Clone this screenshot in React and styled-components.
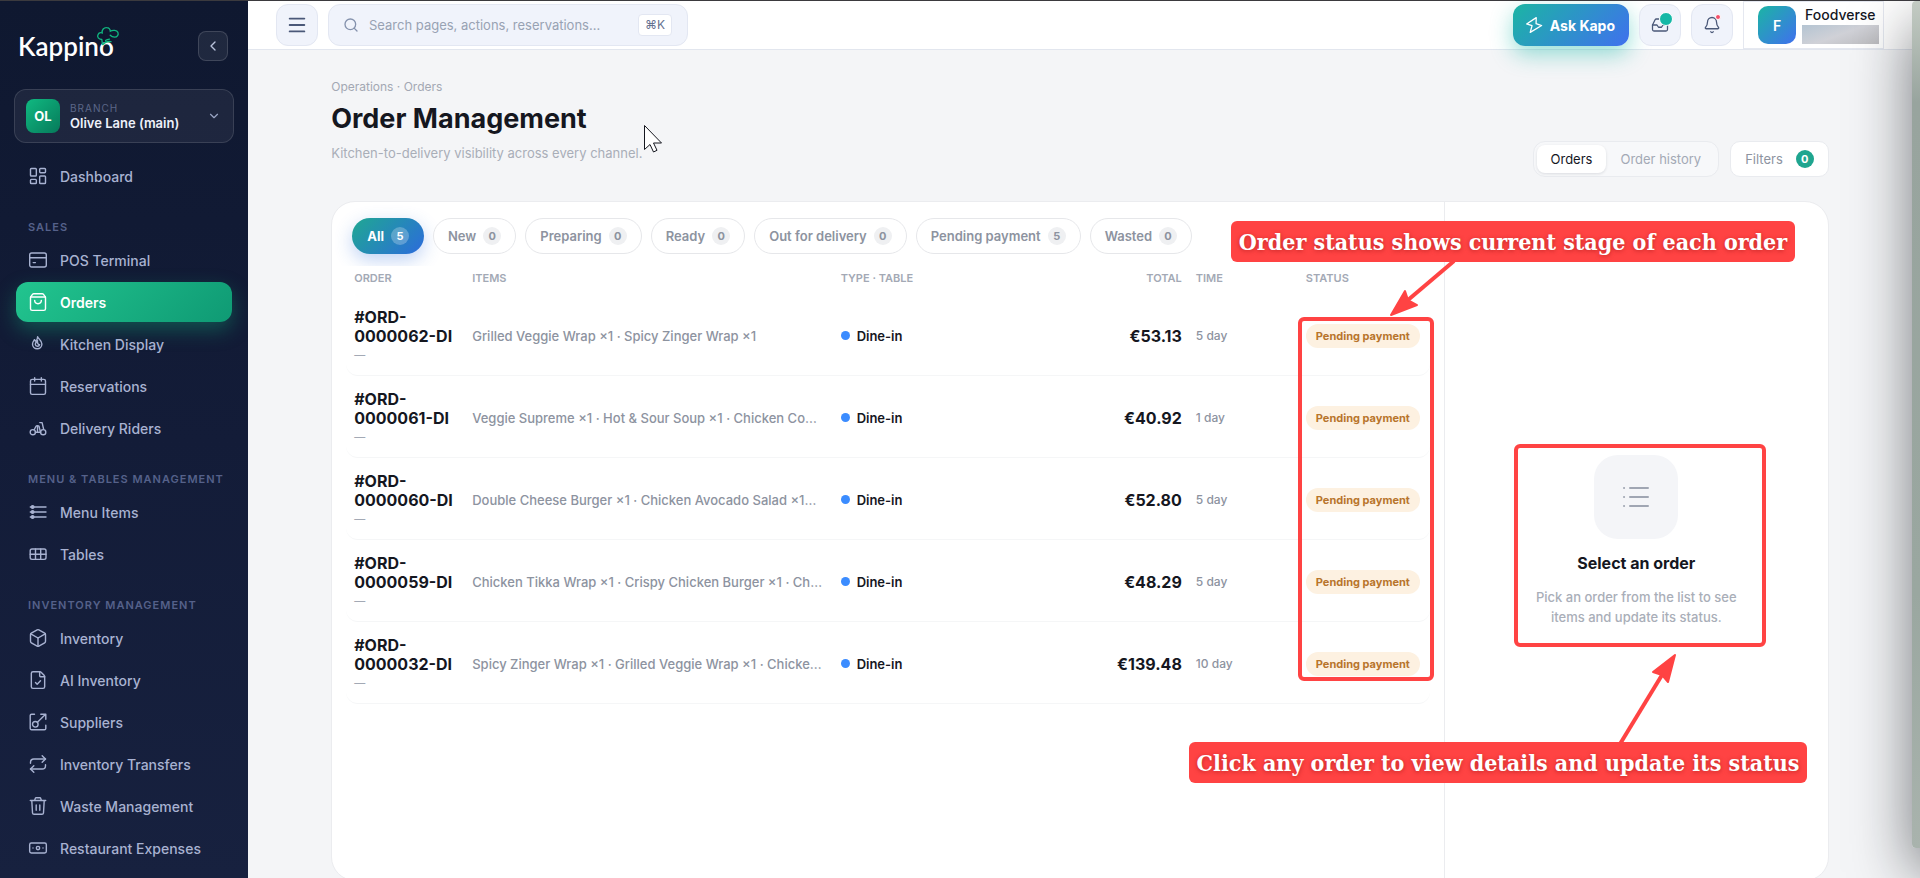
import React from 'react';
import styled, { createGlobalStyle } from 'styled-components';
import {
  Banknote,
  Bell,
  Box,
  Calendar,
  ChevronDown,
  ChevronLeft,
  FileCheck,
  Inbox,
  LayoutDashboard,
  Menu,
  Repeat,
  Search,
  ShoppingBag,
} from 'lucide-react';

const GlobalStyle = createGlobalStyle`
  *, *::before, *::after { box-sizing: border-box; }

  body {
    margin: 0;
    font-family: Inter, 'Open Sans', sans-serif;
    font-size: 14px;
    color: #15171f;
    background: #f4f5f7;
  }

  button, input { font-family: inherit; }
  h1, h2, p { margin: 0; }
`;

const Page = styled.div`
  position: relative;
  display: flex;
  height: 100vh;
  overflow: hidden;
  border-top: 1px solid #3b3a3e;
`;

/* Sidebar */

const Sidebar = styled.aside`
  flex: 0 0 248px;
  padding: 30px 14px 0;
  overflow: hidden;
  background: linear-gradient(180deg, #0f1830 0%, #131c38 50%, #17213f 100%);
`;

const Brand = styled.div`
  display: flex;
  align-items: center;
  justify-content: space-between;
  height: 30px;
  padding: 0 6px 0 4px;
`;

const Logo = styled.a`
  position: relative;
  font-family: Lato, sans-serif;
  font-size: 26px;
  font-weight: 600;
  line-height: 30px;
  color: #fff;
  text-decoration: none;
`;

const Hat = styled.svg`
  position: absolute;
  top: -5px;
  right: -6px;
`;

const CollapseButton = styled.button`
  display: grid;
  place-items: center;
  width: 30px;
  height: 30px;
  padding: 0;
  border: 1px solid rgba(255, 255, 255, .14);
  border-radius: 8px;
  background: rgba(255, 255, 255, .07);
  color: #b9c3dc;
`;

const Branch = styled.button`
  display: flex;
  align-items: center;
  gap: 10px;
  width: 100%;
  height: 54px;
  margin: 28px 0 13px;
  padding: 0 12px 0 11px;
  border: 1px solid rgba(255, 255, 255, .12);
  border-radius: 12px;
  background: rgba(255, 255, 255, .06);
  color: #9aa5c4;
  text-align: left;
`;

const BranchAvatar = styled.span`
  display: grid;
  place-items: center;
  width: 34px;
  height: 34px;
  border-radius: 8px;
  background: linear-gradient(135deg, #10b981, #067a5a);
  font-size: 13px;
  font-weight: 700;
  color: #fff;
`;

const BranchText = styled.span`
  flex: 1;
  font-size: 13px;
  font-weight: 600;
  line-height: 16px;
  color: #eef1fa;
`;

const BranchLabel = styled.span`
  display: block;
  font-size: 10px;
  font-weight: 400;
  line-height: 13px;
  letter-spacing: 1px;
  color: #5c6788;
`;

const Nav = styled.nav`
  display: flex;
  flex-direction: column;
  gap: 2px;
  padding: 0 2px;
`;

const NavLabel = styled.div`
  padding: 21px 12px 3px;
  font-size: 11px;
  font-weight: 600;
  line-height: 16px;
  letter-spacing: 1px;
  color: #55618a;
  white-space: nowrap;
`;

const NavLink = styled.a`
  display: flex;
  flex: 0 0 40px;
  align-items: center;
  gap: 12px;
  padding: 0 12px;
  border-radius: 12px;
  font-size: 14px;
  font-weight: ${p => (p.$active ? 600 : 500)};
  color: ${p => (p.$active ? '#fff' : '#a8b2d1')};
  text-decoration: none;
  background: ${p => (p.$active ? 'linear-gradient(135deg, #22c58f, #0f9a74)' : 'none')};
  box-shadow: ${p => (p.$active ? '0 8px 20px rgba(16, 185, 129, .35)' : 'none')};
`;

/* Top bar */

const Content = styled.div`
  flex: 1;
  min-width: 0;
  display: flex;
  flex-direction: column;
`;

const TopBar = styled.header`
  display: flex;
  flex: 0 0 49px;
  align-items: center;
  gap: 10px;
  padding: 0 36px 0 28px;
  border-bottom: 1px solid #e2e6ee;
  background: #fff;
`;

const SquareButton = styled.button`
  position: relative;
  display: grid;
  place-items: center;
  width: 42px;
  height: 42px;
  padding: 0;
  border: 1px solid #e3e7f2;
  border-radius: 12px;
  background: #f0f3fb;
  color: #4a5878;
`;

const Dot = styled.span`
  position: absolute;
  top: ${p => p.$top}px;
  right: ${p => p.$right}px;
  width: ${p => p.$size}px;
  height: ${p => p.$size}px;
  border: 1px solid #fff;
  border-radius: 50%;
  background: ${p => p.$color};
`;

const SearchBox = styled.label`
  display: flex;
  align-items: center;
  gap: 10px;
  width: 360px;
  height: 42px;
  padding: 0 15px 0 14px;
  border: 1px solid #e3e7f2;
  border-radius: 12px;
  background: #f0f3fb;
  color: #8592ad;

  input {
    flex: 1;
    min-width: 0;
    padding: 0;
    border: 0;
    outline: 0;
    background: none;
    font-size: 13px;
  }

  input::placeholder { color: #98a2b3; }
`;

const Kbd = styled.kbd`
  padding: 0 6px;
  border: 1px solid #e3e7f2;
  border-radius: 4px;
  background: #fff;
  font-family: Inter, 'DejaVu Sans', sans-serif;
  font-size: 12px;
  line-height: 20px;
  color: #64718f;
`;

const Spacer = styled.div`
  flex: 1;
`;

const AskButton = styled.button`
  display: flex;
  align-items: center;
  gap: 7px;
  height: 42px;
  padding: 0 14px 0 12px;
  border: 0;
  border-radius: 12px;
  background: linear-gradient(135deg, #1bb5a4, #4070ee);
  box-shadow: 0 8px 22px rgba(20, 184, 166, .45);
  font-size: 14px;
  font-weight: 700;
  color: #fff;
`;

const Profile = styled.div`
  display: flex;
  align-items: center;
  gap: 6px;
  align-self: stretch;
  padding: 0 4px 0 14px;
  border: 1px solid #e5e8f0;
`;

const ProfileAvatar = styled.span`
  display: grid;
  place-items: center;
  width: 38px;
  height: 38px;
  border-radius: 10px;
  background: linear-gradient(135deg, #1bb5a4, #4070ee);
  font-size: 14px;
  font-weight: 600;
  color: #fff;
`;

const ProfileName = styled.div`
  padding: 0 0 2px 3px;
  font-size: 14px;
  font-weight: 500;
  line-height: 16px;
`;

const ProfileMask = styled.div`
  width: 77px;
  height: 19px;
  background: linear-gradient(160deg, #b4c4d2, #d0d1d7 50%, #bcbcbf);
`;

/* Page body */

const Main = styled.main`
  flex: 1;
  min-height: 0;
  padding: 28px 8px 0 0;
  overflow: hidden;
`;

const Container = styled.div`
  width: 90%;
  margin: 0 auto;
`;

const PageHead = styled.div`
  display: flex;
  align-items: flex-end;
  justify-content: space-between;
  padding-bottom: 24px;
`;

const Crumbs = styled.p`
  font-size: 12px;
  line-height: 18px;
  color: #a3a8b3;
`;

const Title = styled.h1`
  padding: 4px 0 6px;
  font-size: 27px;
  font-weight: 700;
  line-height: 38px;
  color: #15171f;
`;

const Subtitle = styled.p`
  padding-bottom: 15px;
  font-size: 13px;
  line-height: 18px;
  color: #a9aeb8;
`;

const HeadActions = styled.div`
  display: flex;
  gap: 11px;
`;

const Segments = styled.div`
  display: flex;
  padding: 3px;
  border: 1px solid #e9ebef;
  border-radius: 12px;
  background: #f7f8fa;
`;

const Segment = styled.button`
  height: 28px;
  padding: 0 14px;
  border: 0;
  border-radius: 8px;
  background: ${p => (p.$active ? '#fff' : 'none')};
  box-shadow: ${p => (p.$active ? '0 1px 3px rgba(20, 25, 40, .12)' : 'none')};
  font-size: 13px;
  color: ${p => (p.$active ? '#15171f' : '#a3a9b5')};
`;

const FilterButton = styled.button`
  display: flex;
  align-items: center;
  gap: 13px;
  height: 36px;
  padding: 0 14px;
  border: 1px solid #e9ebef;
  border-radius: 10px;
  background: #fff;
  font-size: 13px;
  color: #8d939f;
`;

const Count = styled.span`
  display: grid;
  place-items: center;
  width: 18px;
  height: 18px;
  border-radius: 50%;
  background: ${p => p.$bg};
  font-size: 11px;
  font-weight: 700;
  color: ${p => p.$color};
`;

const Card = styled.section`
  display: grid;
  grid-template-columns: minmax(0, 1fr) 384px;
  min-height: 680px;
  border: 1px solid #ebecef;
  border-radius: 24px;
  overflow: hidden;
  background: #fff;
`;

const ListPane = styled.div`
  padding: 0 14px;
`;

const Pills = styled.div`
  display: flex;
  gap: 9px;
  margin: 0 -14px;
  padding: 16px 20px 12px;
  overflow: hidden;
`;

const Pill = styled.button`
  display: flex;
  align-items: center;
  gap: 7px;
  height: 36px;
  padding: 0 14px;
  border: 1px solid ${p => (p.$active ? 'transparent' : '#e6e7ea')};
  border-radius: 18px;
  background: ${p => (p.$active ? 'linear-gradient(135deg, #1fa892, #2c6bdc) border-box' : '#fff')};
  box-shadow: ${p => (p.$active ? '0 6px 18px rgba(44, 107, 220, .3)' : 'none')};
  font-size: 13px;
  font-weight: ${p => (p.$active ? 700 : 600)};
  color: ${p => (p.$active ? '#fff' : '#8d939f')};
  white-space: nowrap;
`;

const Table = styled.table`
  width: 100%;
  table-layout: fixed;
  border-spacing: 0;
`;

const Th = styled.th`
  width: ${p => p.$width || 'auto'};
  height: 28px;
  padding: 0 7px 4px;
  font-size: 11px;
  font-weight: 600;
  color: #a3a9b5;
  text-align: ${p => (p.$right ? 'right' : 'left')};

  &:first-child { padding-left: 8px; }
`;

const Row = styled.tr`
  td {
    height: 82px;
    padding: 2px 7px 0;
    border-bottom: 1px solid #f5f6f7;
  }

  td:first-child {
    padding: 4px 7px 0 8px;
    border-bottom-left-radius: 12px;
  }

  td:last-child { border-bottom-right-radius: 12px; }
`;

const OrderId = styled.div`
  font-size: 16px;
  font-weight: 700;
  line-height: 19px;
`;

const Note = styled.div`
  font-size: 11px;
  line-height: 19px;
  color: #a3a9b5;
`;

const Items = styled.div`
  overflow: hidden;
  font-size: 13px;
  font-weight: 500;
  color: #8d939f;
  text-overflow: ellipsis;
  white-space: nowrap;
`;

const Type = styled.div`
  display: flex;
  align-items: center;
  gap: 7px;
  font-size: 13px;
  font-weight: 600;

  &::before {
    content: '';
    width: 9px;
    height: 9px;
    border-radius: 50%;
    background: #3b8cff;
  }
`;

const Total = styled.div`
  font-size: 16px;
  font-weight: 700;
  text-align: right;
`;

const Time = styled.div`
  font-size: 12px;
  font-weight: 500;
  color: #8d939f;
`;

const Status = styled.span`
  display: inline-block;
  padding: 0 10px;
  border-radius: 12px;
  background: #fdf1e1;
  font-size: 11px;
  font-weight: 700;
  line-height: 24px;
  color: #b8752c;
  white-space: nowrap;
`;

const DetailPane = styled.div`
  display: flex;
  flex-direction: column;
  align-items: center;
  justify-content: center;
  border-left: 1px solid #ebecef;
  text-align: center;
`;

const EmptyIcon = styled.div`
  display: grid;
  place-items: center;
  width: 84px;
  height: 84px;
  border-radius: 24px;
  background: #f4f5f8;
`;

const EmptyTitle = styled.h2`
  padding: 12px 0 12px;
  font-size: 16px;
  font-weight: 700;
  line-height: 24px;
`;

const EmptyText = styled.p`
  max-width: 220px;
  font-size: 13px;
  font-weight: 500;
  line-height: 20px;
  color: #a9aeb8;
`;

/* Things that float over the page */

const Drawer = styled.div`
  position: absolute;
  top: 0;
  right: -392px;
  width: 400px;
  height: 847px;
  border-radius: 4px;
  background: linear-gradient(180deg, #c3cbc3, #98a49e 12%, #9aa7a0 70%, #a9b3ad);
  box-shadow: 0 24px 60px rgba(15, 18, 24, .55);
`;

const Overlay = styled.div`
  position: absolute;
  top: -1px;
  right: 0;
  width: 740px;
  height: 878px;
  pointer-events: none;
`;

const Arrows = styled.svg`
  position: absolute;
  inset: 0;
  fill: #ff4343;
  stroke: #ff4343;
  stroke-linejoin: round;
`;

const Frame = styled.div`
  position: absolute;
  left: ${p => p.$x}px;
  top: ${p => p.$y}px;
  width: ${p => p.$w}px;
  height: ${p => p.$h}px;
  border: 4px solid #ff4343;
  border-radius: 6px;
`;

const Callout = styled.div`
  position: absolute;
  left: ${p => p.$x}px;
  top: ${p => p.$y}px;
  width: ${p => p.$w}px;
  border-radius: 6px;
  background: #ff4343;
  font-family: 'DejaVu Serif Condensed', 'DejaVu Serif', serif;
  font-size: 23px;
  font-weight: 700;
  line-height: 41px;
  color: #fff;
  text-align: center;
  text-shadow: 0 1px 4px rgba(150, 20, 20, .6);
  white-space: nowrap;
`;

const Cursor = styled.svg`
  position: absolute;
  left: 643px;
  top: 123px;
`;

/* Icons */

const Glyph = ({ children, size = 20, ...rest }) =>
  (<svg
    width={size}
    height={size}
    viewBox="0 0 20 20"
    fill="none"
    stroke="currentColor"
    strokeWidth="1.4"
    strokeLinecap="round"
    strokeLinejoin="round"
    aria-hidden="true"
    {...rest}
  >
    {children}
  </svg>);

const line = Icon => () => <Icon size={20} strokeWidth={1.7} />;

const PosIcon = () =>
  (<Glyph>
    <rect x="1.7" y="3" width="16.6" height="14" rx="2" />
    <path d="M1.7 7.8h16.6M5.2 12.6h2.2" />
  </Glyph>);

const FlameIcon = () =>
  (<Glyph>
    <path d="M9.6 2.6c.5 2.4 4.3 3.8 4.3 7.5a4.7 4.7 0 0 1-9.4 0c0-2.2 1.3-3.2 2-4.4.5.7.8 1.2 1.3 1.5C9 6 9.7 4.5 9.6 2.6z" />
    <path d="M9.5 6.5C8.6 8 7.3 8.6 7.3 10.4a2.2 2.2 0 0 0 4.3.3c-1.5.2-2.5-1.7-2.1-4.2z" />
  </Glyph>);

const RiderIcon = () =>
  (<Glyph>
    <circle cx="4.8" cy="14.2" r="2.6" />
    <circle cx="15.2" cy="14.2" r="2.6" />
    <path d="M7.4 14.2h5.200M6.2 11.8 8 8.2c.4-.8 2.4-.8 3 0l1.200 5M11.800 4.600h2.300l1.500 6.600M9.500 8v5" />
  </Glyph>);

const MenuItemsIcon = () =>
  (<Glyph>
    <path d="M2.3 5H18M2.3 10H18M2.3 15H18" />
    <circle cx="4.6" cy="5" r="1.3" fill="currentColor" />
    <circle cx="4.6" cy="10" r="1.3" fill="currentColor" />
    <circle cx="4.6" cy="15" r="1.3" fill="currentColor" />
  </Glyph>);

const TablesIcon = () =>
  (<Glyph>
    <rect x="2.2" y="5" width="15.8" height="10.4" rx="1.8" />
    <path d="M2.2 10.2H18M7.5 5v10.4M12.7 5v10.4" />
  </Glyph>);

const SuppliersIcon = () =>
  (<Glyph>
    <path d="M6.5 2.2H3.6c-.8 0-1.4.6-1.4 1.4v12.800c0 .8.6 1.400 1.400 1.400h12.800c.8 0 1.400-.6 1.400-1.400v-3.200" />
    <circle cx="7.3" cy="12.3" r="2.8" />
    <path d="M9.4 10.2l8.200-8M12.800 2.200h5v5" />
  </Glyph>);

const TrashIcon = () =>
  (<Glyph>
    <path d="M2.300 4.500h15.400M6.600 4.300l.9-2.200c.1-.3.300-.4.600-.4h3.800c.3 0 .5.100.6.400l.9 2.200M3.800 4.800l.7 12c.1.9.7 1.500 1.600 1.500h7.800c.9 0 1.500-.6 1.600-1.500l.7-12M8.200 9v5.300M11.800 9v5.300" />
  </Glyph>);

const BoltIcon = () =>
  (<Glyph size={18}>
    <path d="M12.500 1.800 1.800 8.800l6 2-2 7.400 12.700-7.600-6.200-2.100z" />
  </Glyph>);

const nav = [
  { items: [['Dashboard', line(LayoutDashboard)]] },
  {
    label: 'SALES',
    items: [
      ['POS Terminal', PosIcon],
      ['Orders', line(ShoppingBag)],
      ['Kitchen Display', FlameIcon],
      ['Reservations', line(Calendar)],
      ['Delivery Riders', RiderIcon],
    ],
  },
  {
    label: 'MENU & TABLES MANAGEMENT',
    items: [['Menu Items', MenuItemsIcon], ['Tables', TablesIcon]],
  },
  {
    label: 'INVENTORY MANAGEMENT',
    items: [
      ['Inventory', line(Box)],
      ['AI Inventory', line(FileCheck)],
      ['Suppliers', SuppliersIcon],
      ['Inventory Transfers', line(Repeat)],
      ['Waste Management', TrashIcon],
      ['Restaurant Expenses', line(Banknote)],
    ],
  },
];

const filters = [
  ['All', 5],
  ['New', 0],
  ['Preparing', 0],
  ['Ready', 0],
  ['Out for delivery', 0],
  ['Pending payment', 5],
  ['Wasted', 0],
];

const orders = [
  ['0000062-DI', 'Grilled Veggie Wrap ×1 · Spicy Zinger Wrap ×1', '€53.13', '5 day'],
  ['0000061-DI', 'Veggie Supreme ×1 · Hot & Sour Soup ×1 · Chicken Co…', '€40.92', '1 day'],
  ['0000060-DI', 'Double Cheese Burger ×1 · Chicken Avocado Salad ×1…', '€52.80', '5 day'],
  ['0000059-DI', 'Chicken Tikka Wrap ×1 · Crispy Chicken Burger ×1 · Ch…', '€48.29', '5 day'],
  ['0000032-DI', 'Spicy Zinger Wrap ×1 · Grilled Veggie Wrap ×1 · Chicke…', '€139.48', '10 day'],
];

const SideNav = () =>
  (<Sidebar>
    <Brand>
      <Logo href="#">
        Kappino
        <Hat width="24" height="20" viewBox="0 0 24 20" fill="none" stroke="#10b981" strokeWidth="1.3" strokeLinecap="round">
          <path d="M6.5 18.5 5.8 13.5C2.5 13.2.9 10.8 2 8.6c.8-1.7 2.6-2.2 4.200-1.600C5.600 3.800 8 1.400 10.600 1.600c2.300.1 3.600 1.700 3.700 3.600 2.500-1.400 6.500-1 7.600 1.200 1 2.200-.6 4.800-3.400 4.800-2-.1-3.200-.9-4.300-2M7 18.500c1.800-2.300 5-3.400 8-2.800M9.500 14.500c1-.8 2.300-1.300 4-1.400" />
        </Hat>
      </Logo>
      <CollapseButton aria-label="Collapse sidebar">
        <ChevronLeft size={16} />
      </CollapseButton>
    </Brand>
    <Branch>
      <BranchAvatar>OL</BranchAvatar>
      <BranchText>
        <BranchLabel>BRANCH</BranchLabel>
        Olive Lane (main)
      </BranchText>
      <ChevronDown size={14} />
    </Branch>
    <Nav>
      {nav.map(group =>
        (<React.Fragment key={group.label || 'top'}>
          {group.label && <NavLabel>{group.label}</NavLabel>}
          {group.items.map(([name, Icon]) =>
            (<NavLink key={name} href="#" $active={name === 'Orders'}>
              <Icon />
              {name}
            </NavLink>),
          )}
        </React.Fragment>),
      )}
    </Nav>
  </Sidebar>);

const Header = () =>
  (<TopBar>
    <SquareButton aria-label="Toggle menu">
      <Menu size={22} strokeWidth={2} />
    </SquareButton>
    <SearchBox>
      <Search size={16} />
      <input aria-label="Search" placeholder="Search pages, actions, reservations…" />
      <Kbd>⌘K</Kbd>
    </SearchBox>
    <Spacer />
    <AskButton>
      <BoltIcon />
      Ask Kapo
    </AskButton>
    <SquareButton aria-label="Inbox">
      <Inbox size={18} strokeWidth={1.7} />
      <Dot $top={7} $right={7} $size={14} $color="#14b8a6" />
    </SquareButton>
    <SquareButton aria-label="Notifications">
      <Bell size={18} strokeWidth={1.7} />
      <Dot $top={9} $right={11} $size={6} $color="#f4506a" />
    </SquareButton>
    <Profile>
      <ProfileAvatar>F</ProfileAvatar>
      <div>
        <ProfileName>Foodverse</ProfileName>
        <ProfileMask />
      </div>
    </Profile>
  </TopBar>);

const OrdersTable = () =>
  (<Table>
    <thead>
      <tr>
        <Th $width="119px">ORDER</Th>
        <Th $width="34%">ITEMS</Th>
        <Th>TYPE · TABLE</Th>
        <Th $width="120px" $right>TOTAL</Th>
        <Th $width="110px">TIME</Th>
        <Th $width="131px">STATUS</Th>
      </tr>
    </thead>
    <tbody>
      {orders.map(([id, items, total, time]) =>
        (<Row key={id}>
          <td>
            <OrderId>
              #ORD-<br />{id}
            </OrderId>
            <Note>—</Note>
          </td>
          <td><Items>{items}</Items></td>
          <td><Type>Dine-in</Type></td>
          <td><Total>{total}</Total></td>
          <td><Time>{time}</Time></td>
          <td><Status>Pending payment</Status></td>
        </Row>),
      )}
    </tbody>
  </Table>);

const EmptyDetail = () =>
  (<DetailPane>
    <EmptyIcon>
      <svg width="28" height="22" viewBox="0 0 28 22" stroke="#a0a6b3" strokeWidth="2" strokeLinecap="round">
        <path d="M8 2h18M8 11h18M8 20h18M2 2h.1M2 11h.1M2 20h.1" />
      </svg>
    </EmptyIcon>
    <EmptyTitle>Select an order</EmptyTitle>
    <EmptyText>
      Pick an order from the list to see items and update its status.
    </EmptyText>
  </DetailPane>);

const Annotations = () =>
  (<Overlay>
    <Arrows width="740" height="878" viewBox="1180 0 740 878">
      <path d="M1454 261 1408 300" strokeWidth="4" />
      <path d="M1391 315 1405 291 1408 300 1417 305z" strokeWidth="2" />
      <path d="M1620 744 1662 675" strokeWidth="4" />
      <path d="M1675 655 1653 672 1662 675 1668 682z" strokeWidth="2" />
    </Arrows>
    <Frame $x={118} $y={317} $w={136} $h={364} />
    <Frame $x={334} $y={444} $w={252} $h={203} />
    <Callout $x={51} $y={221} $w={564}>Order status shows current stage of each order</Callout>
    <Callout $x={9} $y={742} $w={618}>Click any order to view details and update its status</Callout>
  </Overlay>);

const App = () =>
  (<Page>
    <GlobalStyle />
    <SideNav />
    <Content>
      <Header />
      <Main>
        <Container>
          <PageHead>
            <div>
              <Crumbs>Operations · Orders</Crumbs>
              <Title>Order Management</Title>
              <Subtitle>Kitchen-to-delivery visibility across every channel.</Subtitle>
            </div>
            <HeadActions>
              <Segments>
                <Segment $active>Orders</Segment>
                <Segment>Order history</Segment>
              </Segments>
              <FilterButton>
                Filters
                <Count $bg="#1fa58f" $color="#fff">0</Count>
              </FilterButton>
            </HeadActions>
          </PageHead>
          <Card>
            <ListPane>
              <Pills>
                {filters.map(([name, count]) => {
                  const active = name === 'All';
                  return (
                    <Pill key={name} $active={active}>
                      {name}
                      <Count
                        $bg={active ? 'rgba(255, 255, 255, .25)' : '#eff0f2'}
                        $color={active ? '#fff' : '#8d939f'}
                      >
                        {count}
                      </Count>
                    </Pill>
                  );
                })}
              </Pills>
              <OrdersTable />
            </ListPane>
            <EmptyDetail />
          </Card>
        </Container>
      </Main>
    </Content>
    <Drawer />
    <Annotations />
    <Cursor width="20" height="30" viewBox="0 0 20 30" fill="#fff" stroke="#15171f">
      <path d="M1.5 1.5v24l5.5-5 3.5 7.5 3.5-1.7-3.5-7.300h8z" />
    </Cursor>
  </Page>);

export default App;
